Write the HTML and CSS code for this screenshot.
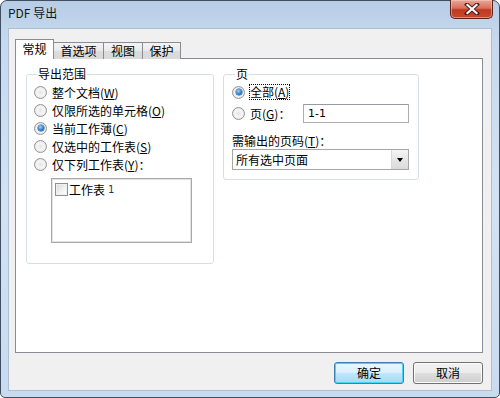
FILE: index.html
```html
<!DOCTYPE html>
<html lang="zh">
<head>
<meta charset="utf-8">
<title>PDF 导出</title>
<link rel="stylesheet" href="styles.css">
</head>
<body>
<div class="window">
  <div class="titlebar">
    <span class="title">PDF 导出</span>
    <div class="close">
      <svg width="16" height="12" viewBox="0 0 16 12">
        <path d="M3 1.5 L13 10.5 M13 1.5 L3 10.5" stroke="#4a1a14" stroke-width="4" stroke-linecap="square"/>
        <path d="M3.5 2 L12.5 10 M12.5 2 L3.5 10" stroke="#ffffff" stroke-width="2.2" stroke-linecap="square"/>
      </svg>
    </div>
  </div>
  <div class="client">
    <div class="tabs">
      <div class="tab active">常规</div>
      <div class="tab">首选项</div>
      <div class="tab">视图</div>
      <div class="tab">保护</div>
    </div>
    <div class="panel">
      <fieldset class="group range">
        <legend>导出范围</legend>
        <div class="row"><span class="radio"></span><span>整个文档(<u>W</u>)</span></div>
        <div class="row"><span class="radio"></span><span>仅限所选的单元格(<u>O</u>)</span></div>
        <div class="row"><span class="radio checked"></span><span>当前工作薄(<u>C</u>)</span></div>
        <div class="row"><span class="radio"></span><span>仅选中的工作表(<u>S</u>)</span></div>
        <div class="row"><span class="radio"></span><span>仅下列工作表(<u>Y</u>)：</span></div>
        <div class="listbox">
          <div class="item"><span class="check"></span><span>工作表</span><span class="num">1</span></div>
        </div>
      </fieldset>
      <fieldset class="group pages">
        <legend>页</legend>
        <div class="row"><span class="radio checked"></span><span class="focus">全部(<u>A</u>)</span></div>
        <div class="row row-input"><span class="radio"></span><span>页(<u>G</u>)：</span><span class="input">1-1</span></div>
        <div class="label">需输出的页码(<u>T</u>)：</div>
        <div class="select"><span class="select-text">所有选中页面</span><span class="arrow"></span></div>
      </fieldset>
    </div>
    <div class="buttons">
      <div class="btn default">确定</div>
      <div class="btn">取消</div>
    </div>
  </div>
</div>
</body>
</html>
```

FILE: styles.css
```css
* { box-sizing: border-box; }
html, body { margin: 0; padding: 0; }
body {
  width: 500px;
  height: 398px;
  overflow: hidden;
  background: #ffffff;
  font-family: "Noto Sans CJK SC", "Noto Sans", sans-serif;
  font-size: 12px;
  color: #000;
}
.window {
  width: 500px;
  height: 398px;
  border: 1px solid #3f4e60;
  border-radius: 7px 7px 5px 5px;
  background: linear-gradient(180deg, #b7cde6 0%, #c6d9ee 10%, #d2e2f3 50%, #c9dbef 100%);
  padding: 0 7px 6px 7px;
  display: flex;
  flex-direction: column;
}
.titlebar {
  height: 27px;
  display: flex;
  align-items: flex-start;
  flex-shrink: 0;
}
.title {
  margin-top: 4px;
  line-height: 16px;
  color: #101820;
}
.close {
  margin-left: auto;
  margin-right: -1px;
  margin-top: -1px;
  width: 43px;
  height: 19px;
  border: 1px solid #5f2219;
  border-top: none;
  border-radius: 0 0 5px 5px;
  background: linear-gradient(180deg, #e9a699 0%, #d9705c 45%, #c0381f 55%, #c84a31 100%);
  box-shadow: inset 0 0 0 1px rgba(255,220,210,0.45);
  display: flex;
  align-items: center;
  justify-content: center;
}
.close svg { display: block; }
.client {
  flex: 1;
  background: #f0f0f0;
  border: 1px solid #aebfd3;
  padding: 11px 8px 6px 6px;
  display: flex;
  flex-direction: column;
}
.tabs {
  display: flex;
  align-items: flex-end;
  height: 19px;
  position: relative;
  z-index: 1;
  margin-bottom: -1px;
}
.tab {
  height: 17px;
  padding: 0 6px;
  border: 1px solid #898c95;
  border-bottom: none;
  border-left: none;
  background: linear-gradient(180deg, #f4f4f4 0%, #e9e9e9 50%, #dcdcdc 51%, #d9d9d9 100%);
  line-height: 16px;
  text-align: center;
}
.tab:nth-child(2) { width: 50px; }
.tab:nth-child(3) { width: 39px; }
.tab:nth-child(4) { width: 38px; }
.tab.active {
  height: 20px;
  width: 39px;
  border-left: 1px solid #898c95;
  background: #ffffff;
  line-height: 18px;
  margin-right: 0;
}
.panel {
  width: 468px;
  height: 295px;
  background: #ffffff;
  border: 1px solid #898c95;
  padding: 7px 10px;
  display: flex;
  align-items: flex-start;
  gap: 9px;
}
.group {
  margin: 0;
  border: 1px solid #d5dfe5;
  border-radius: 3px;
  min-width: 0;
}
.group legend {
  padding: 0 1px;
  margin-left: 3px;
  line-height: 16px;
}
.range {
  width: 188px;
  height: 198px;
  padding: 1px 6px 0 7px;
}
.pages {
  width: 196px;
  height: 114px;
  padding: 1px 8px 0 8px;
}
.row {
  display: flex;
  align-items: center;
  height: 18px;
  gap: 5px;
}
u { text-decoration: underline; text-underline-offset: 1px; }
.radio {
  width: 13px;
  height: 13px;
  border-radius: 50%;
  border: 1px solid #969696;
  background: radial-gradient(circle at 50% 50%, #e4e4e4 0%, #f6f6f6 45%, #d4d4d4 100%);
  flex-shrink: 0;
  display: flex;
  align-items: center;
  justify-content: center;
}
.radio.checked::after {
  content: "";
  width: 6px;
  height: 6px;
  border-radius: 50%;
  background: radial-gradient(circle at 40% 35%, #9fd3ff 0%, #2b7fd0 55%, #0e4b8f 100%);
  box-shadow: 0 0 0 0.5px #1b4f86;
}
.focus {
  outline: 1px dotted #000;
  outline-offset: 0;
  line-height: 14px;
}
.listbox {
  margin-top: 5px;
  margin-left: 17px;
  width: 141px;
  height: 65px;
  border: 1px solid #a9a9a9;
  box-shadow: inset 0 0 0 1px #e2e2e2;
  background: #fff;
  padding: 2px 3px;
}
.item {
  display: flex;
  align-items: center;
  height: 15px;
  margin-top: 1px;
}
.check {
  width: 13px;
  height: 13px;
  border: 1px solid #8f8f8f;
  background: linear-gradient(135deg, #d6d6d6 0%, #f4f4f4 60%, #ffffff 100%);
  box-shadow: inset 0 0 0 1px #f0f0f0;
  margin-right: 1px;
}
.num {
  margin-left: 3px;
  font-size: 10px;
  color: #1d3670;
  font-family: "DejaVu Sans", sans-serif;
}
.row-input {
  margin-top: 3px;
}
.input {
  margin-left: auto;
  margin-right: 1px;
  width: 106px;
  height: 19px;
  border: 1px solid #abadb3;
  border-top-color: #979aa1;
  background: #fff;
  padding-left: 4px;
  line-height: 17px;
  font-size: 11px;
  font-family: "DejaVu Sans", sans-serif;
}
.label {
  margin-top: 10px;
  line-height: 17px;
}
.select {
  width: 177px;
  height: 21px;
  border: 1px solid #a6a6a6;
  background: #fff;
  display: flex;
  align-items: center;
}
.select-text {
  flex: 1;
  padding-left: 3px;
  line-height: 19px;
}
.arrow {
  width: 17px;
  height: 19px;
  background: linear-gradient(180deg, #f5f5f5 0%, #e6e6e6 50%, #dadada 100%);
  border-left: 1px solid #d8d8d8;
  display: flex;
  align-items: center;
  justify-content: center;
}
.arrow::after {
  content: "";
  border-left: 3.5px solid transparent;
  border-right: 3.5px solid transparent;
  border-top: 4px solid #000;
}
.buttons {
  display: flex;
  justify-content: flex-end;
  gap: 9px;
  margin-top: 9px;
  padding-right: 0;
}
.btn {
  width: 70px;
  height: 22px;
  border: 1px solid #707070;
  border-radius: 3px;
  background: linear-gradient(180deg, #f2f2f2 0%, #ebebeb 50%, #dddddd 51%, #cfcfcf 100%);
  box-shadow: inset 0 0 0 1px #fcfcfc;
  text-align: center;
  line-height: 20px;
}
.btn.default {
  border-color: #3c7fb1;
  background: linear-gradient(180deg, #eaf6fd 0%, #d9f0fc 50%, #bee6fd 51%, #a7d9f5 100%);
  box-shadow: inset 0 0 0 1px #48d4f4;
}
```
